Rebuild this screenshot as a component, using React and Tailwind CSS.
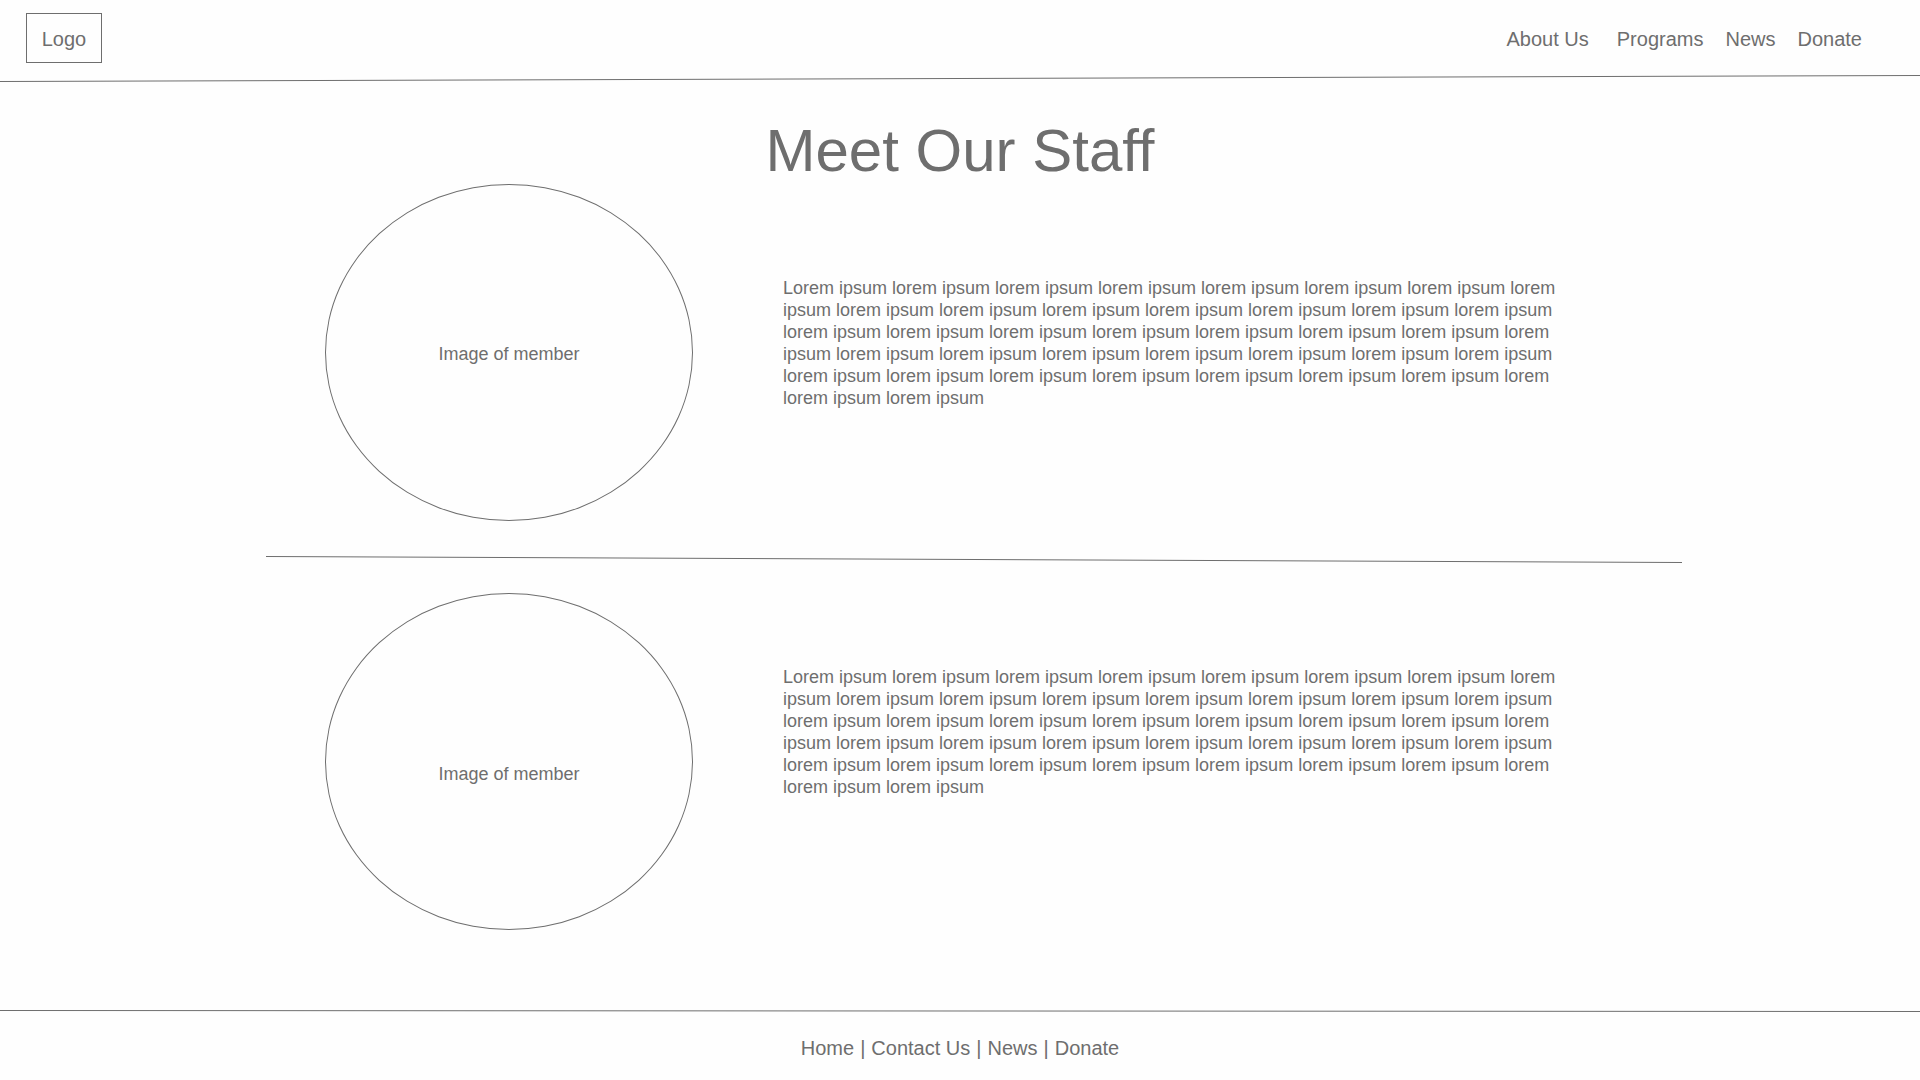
const bio =
  "Lorem ipsum" + " lorem ipsum".repeat(36) + " lorem lorem ipsum lorem ipsum";

const staff = [
  { id: 1, labelSpace: "pt-0.5", bioSpace: "pt-[93px]", bio },
  { id: 2, labelSpace: "pt-6", bioSpace: "pt-[73px]", bio },
];

const navLinks = [
  { label: "About Us", space: "mr-7" },
  { label: "Programs", space: "mr-[22px]" },
  { label: "News", space: "mr-[22px]" },
  { label: "Donate", space: "" },
];

const footerLinks = ["Home", "Contact Us", "News", "Donate"];

// Hand-drawn rule that slopes slightly from one end to the other.
function Rule({ from, to, height, className }) {
  return (
    <svg
      className={className}
      viewBox={`0 0 100 ${height}`}
      preserveAspectRatio="none"
      aria-hidden="true"
    >
      <line
        x1="0"
        y1={from}
        x2="100"
        y2={to}
        stroke="#6e6e6e"
        strokeWidth="1"
        vectorEffect="non-scaling-stroke"
      />
    </svg>
  );
}

function Header() {
  return (
    <header>
      <div className="flex items-center justify-between pt-[13px] pb-3 pl-[26px] pr-[58px]">
        <a
          href="#"
          className="flex h-[50px] w-[76px] items-center justify-center border border-[#6e6e6e] pt-0.5"
        >
          Logo
        </a>
        <nav className="flex pt-0.5">
          {navLinks.map((link) => (
            <a key={link.label} href="#" className={link.space}>
              {link.label}
            </a>
          ))}
        </nav>
      </div>
      <Rule from={6.5} to={0.5} height={7} className="block h-[7px] w-full" />
    </header>
  );
}

function StaffMember({ member }) {
  return (
    <section className="flex items-start gap-[90px] pl-[59px] text-[18px] leading-[22px]">
      <div
        className={`flex h-[337px] w-[368px] shrink-0 items-center justify-center rounded-[50%] border border-[#6e6e6e] ${member.labelSpace}`}
      >
        Image of member
      </div>
      <p className={`max-w-[784px] ${member.bioSpace}`}>{member.bio}</p>
    </section>
  );
}

export default function App() {
  return (
    <div className="flex min-h-screen flex-col bg-[#fefefe] font-['Liberation_Sans',Arial,sans-serif] text-[20px] leading-6 text-[#6e6e6e]">
      <Header />
      <main className="grow">
        <h1 className="pt-[39px] pb-[3px] text-center text-[60px] leading-[60px]">
          Meet Our Staff
        </h1>
        <div className="pl-[266px] pr-[238px]">
          <StaffMember member={staff[0]} />
          <Rule
            from={0.5}
            to={6.5}
            height={7}
            className="mt-[35px] mb-[30px] block h-[7px] w-full"
          />
          <StaffMember member={staff[1]} />
        </div>
      </main>
      <footer>
        <Rule from={0.5} to={1.5} height={2} className="block h-0.5 w-full" />
        <nav className="flex justify-center gap-1.5 pt-6 pb-5">
          {footerLinks.map((label, i) => (
            <span key={label} className="flex gap-1.5">
              {i > 0 && <span>|</span>}
              <a href="#">{label}</a>
            </span>
          ))}
        </nav>
      </footer>
    </div>
  );
}
